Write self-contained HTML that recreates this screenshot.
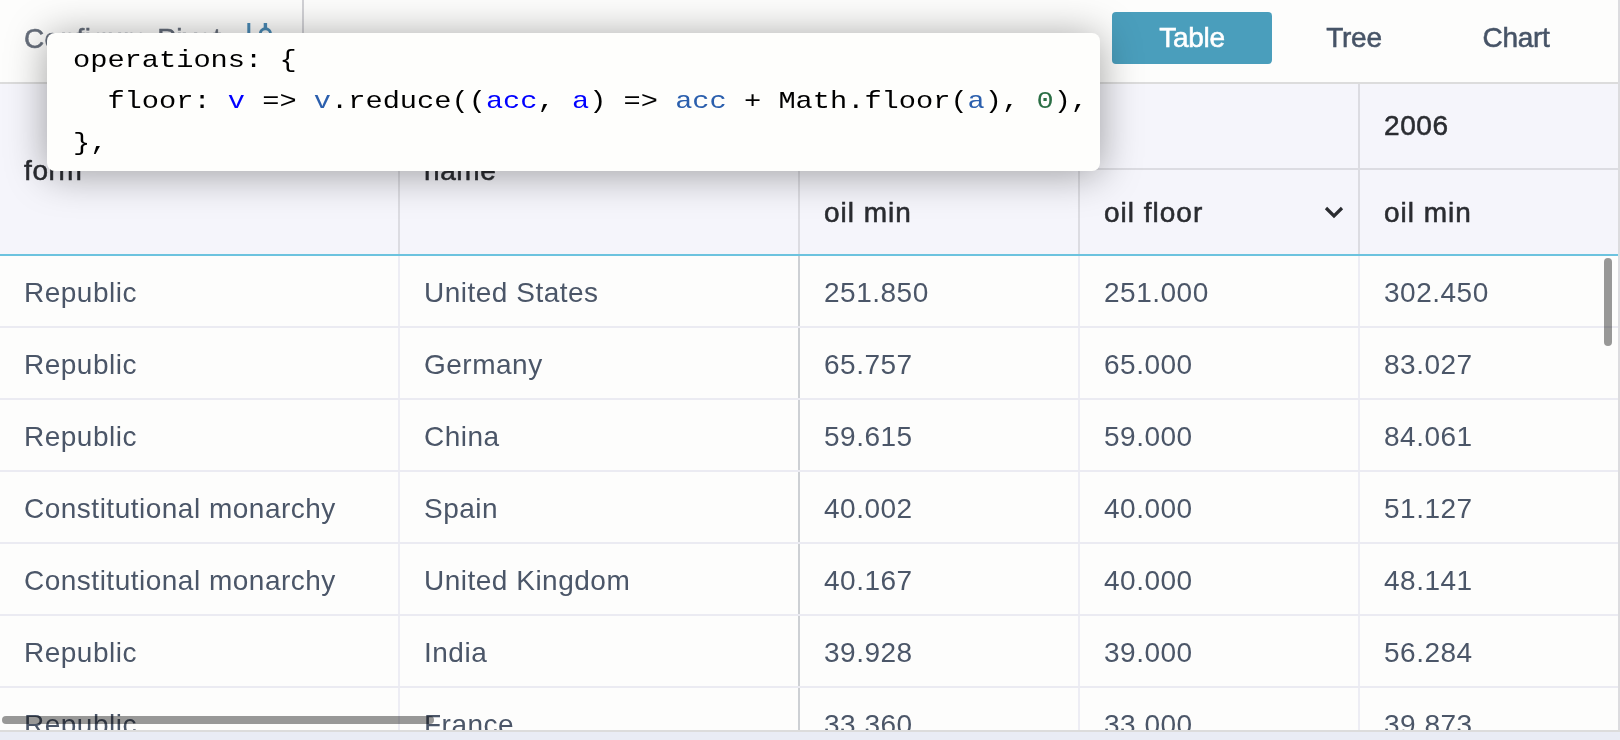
<!DOCTYPE html>
<html><head><meta charset="utf-8">
<style>
html,body{margin:0;padding:0;width:1620px;height:740px;overflow:hidden;background:#e9ecf5;}
body{position:relative;font-family:"Liberation Sans",sans-serif;}
.abs{position:absolute;}
.t{position:absolute;white-space:pre;font-size:28px;line-height:32px;height:32px;}
#app{will-change:transform;position:absolute;left:0;top:0;width:1618px;height:730px;background:#fdfdfc;overflow:hidden;}
.bord-r{position:absolute;left:1618px;top:0;width:2px;height:732px;background:#dcdcdf;}
.bord-b{position:absolute;left:0;top:730px;width:1620px;height:2px;background:#dcdcdc;}
.topbar{position:absolute;left:0;top:0;width:1618px;height:82px;background:#fdfdfc;}
.topline{position:absolute;left:0;top:82px;width:1618px;height:2px;background:#dcdcdc;}
.btn{position:absolute;top:12px;height:52px;width:160px;border-radius:4px;}
.btn.on{box-shadow:0 0 0 1px #fdfdfc;}
.btn .t{left:0;width:160px;text-align:center;top:10.2px;}
.hdr{position:absolute;left:0;top:84px;width:1618px;height:170px;background:#f5f5fb;}
.teal{position:absolute;left:0;top:254px;width:1618px;height:2px;background:#6cc3df;}
.vl{position:absolute;width:2px;}
.hl{position:absolute;height:2px;left:0;width:1618px;background:#ebebf2;}
.cell{color:#4b5668;letter-spacing:0.5px;}
.hd{color:#2a2c31;-webkit-text-stroke:0.55px #2a2c31;letter-spacing:1px;}
.tip{position:absolute;left:47px;top:33px;width:1053px;height:138px;background:#fefefc;border-radius:8px;box-shadow:0 3px 40px rgba(0,0,0,0.37);}
.code{position:absolute;left:0;white-space:pre;font-family:"Liberation Mono",monospace;font-size:24px;line-height:42px;height:42px;color:#000;transform:scaleX(1.19444);transform-origin:0 0;}
.p{color:#0000ff}.s{color:#2b5fad}.n{color:#2a6e44}
.sb{position:absolute;background:rgba(0,0,0,0.4);border-radius:4px;}
</style></head><body>
<div id="app">
  <div class="topbar"></div>
  <div class="t" style="left:24px;top:23px;color:#666e7b;-webkit-text-stroke:0.5px #666e7b;letter-spacing:0.4px">Configure Pivot</div>
  <svg class="abs" style="left:240px;top:18px" width="40" height="40" viewBox="0 0 40 40">
    <rect x="7.3" y="5" width="3" height="30" fill="#4a8ab5"/>
    <rect x="23.7" y="5" width="3.4" height="5" fill="#4a8ab5"/>
    <circle cx="25.4" cy="16" r="5.2" fill="none" stroke="#4a8ab5" stroke-width="3"/>
  </svg>
  <div class="vl" style="left:302px;top:0;height:82px;background:#d2d2d6"></div>
  <div class="btn on" style="left:1112px;background:#4a9ebc"><div class="t" style="color:#fff;-webkit-text-stroke:0.55px #fff;letter-spacing:-0.3px">Table</div></div>
  <div class="btn" style="left:1274px"><div class="t" style="color:#475467;-webkit-text-stroke:0.55px #475467;letter-spacing:-0.3px">Tree</div></div>
  <div class="btn" style="left:1436px"><div class="t" style="color:#475467;-webkit-text-stroke:0.55px #475467;letter-spacing:-0.3px">Chart</div></div>
  <div class="topline"></div>

  <div class="hdr"></div>
  <div class="vl" style="left:398px;top:84px;height:170px;background:#dcdce2"></div>
  <div class="vl" style="left:798px;top:84px;height:170px;background:#dcdce2"></div>
  <div class="vl" style="left:1078px;top:84px;height:170px;background:#dcdce2"></div>
  <div class="vl" style="left:1358px;top:84px;height:170px;background:#dcdce2"></div>
  <div class="abs" style="left:800px;top:168px;width:818px;height:2px;background:#dcdce2"></div>
  <div class="t hd" style="left:24px;top:155px;letter-spacing:0.6px">form</div>
  <div class="t hd" style="left:424px;top:155px;letter-spacing:0.6px">name</div>
  <div class="t hd" style="left:1384px;top:110px;letter-spacing:0.6px">2006</div>
  <div class="t hd" style="left:824px;top:197px">oil min</div>
  <div class="t hd" style="left:1104px;top:197px">oil floor</div>
  <div class="t hd" style="left:1384px;top:197px">oil min</div>
  <svg class="abs" style="left:1318px;top:198px" width="32" height="28" viewBox="0 0 32 28">
    <polyline points="8,10 16,18 24,10" fill="none" stroke="#2a2c30" stroke-width="3.2"/>
  </svg>
  <div class="teal"></div>

  <!-- body -->
  <div class="vl" style="left:398px;top:256px;height:474px;background:#ededf4"></div>
  <div class="vl" style="left:798px;top:256px;height:474px;background:#cdd0d4"></div>
  <div class="vl" style="left:1078px;top:256px;height:474px;background:#ededf4"></div>
  <div class="vl" style="left:1358px;top:256px;height:474px;background:#ededf4"></div>
  <div class="hl" style="top:326px"></div>
  <div class="hl" style="top:398px"></div>
  <div class="hl" style="top:470px"></div>
  <div class="hl" style="top:542px"></div>
  <div class="hl" style="top:614px"></div>
  <div class="hl" style="top:686px"></div>

    <div class="t cell" style="left:24px;top:277.3px">Republic</div>
  <div class="t cell" style="left:424px;top:277.3px">United States</div>
  <div class="t cell" style="left:824px;top:277.3px">251.850</div>
  <div class="t cell" style="left:1104px;top:277.3px">251.000</div>
  <div class="t cell" style="left:1384px;top:277.3px">302.450</div>
  <div class="t cell" style="left:24px;top:349.3px">Republic</div>
  <div class="t cell" style="left:424px;top:349.3px">Germany</div>
  <div class="t cell" style="left:824px;top:349.3px">65.757</div>
  <div class="t cell" style="left:1104px;top:349.3px">65.000</div>
  <div class="t cell" style="left:1384px;top:349.3px">83.027</div>
  <div class="t cell" style="left:24px;top:421.3px">Republic</div>
  <div class="t cell" style="left:424px;top:421.3px">China</div>
  <div class="t cell" style="left:824px;top:421.3px">59.615</div>
  <div class="t cell" style="left:1104px;top:421.3px">59.000</div>
  <div class="t cell" style="left:1384px;top:421.3px">84.061</div>
  <div class="t cell" style="left:24px;top:493.3px">Constitutional monarchy</div>
  <div class="t cell" style="left:424px;top:493.3px">Spain</div>
  <div class="t cell" style="left:824px;top:493.3px">40.002</div>
  <div class="t cell" style="left:1104px;top:493.3px">40.000</div>
  <div class="t cell" style="left:1384px;top:493.3px">51.127</div>
  <div class="t cell" style="left:24px;top:565.3px">Constitutional monarchy</div>
  <div class="t cell" style="left:424px;top:565.3px">United Kingdom</div>
  <div class="t cell" style="left:824px;top:565.3px">40.167</div>
  <div class="t cell" style="left:1104px;top:565.3px">40.000</div>
  <div class="t cell" style="left:1384px;top:565.3px">48.141</div>
  <div class="t cell" style="left:24px;top:637.3px">Republic</div>
  <div class="t cell" style="left:424px;top:637.3px">India</div>
  <div class="t cell" style="left:824px;top:637.3px">39.928</div>
  <div class="t cell" style="left:1104px;top:637.3px">39.000</div>
  <div class="t cell" style="left:1384px;top:637.3px">56.284</div>
  <div class="t cell" style="left:24px;top:709.3px">Republic</div>
  <div class="t cell" style="left:424px;top:709.3px">France</div>
  <div class="t cell" style="left:824px;top:709.3px">33.360</div>
  <div class="t cell" style="left:1104px;top:709.3px">33.000</div>
  <div class="t cell" style="left:1384px;top:709.3px">39.873</div>

  <div class="sb" style="left:1604px;top:258px;width:8px;height:88px"></div>
  <div class="sb" style="left:2px;top:716px;width:432px;height:8px"></div>

  <div class="tip">
    <div class="code" style="left:26px;top:6.6px">operations: {</div>
    <div class="code" style="left:26px;top:48.3px">  floor: <span class="p">v</span> =&gt; <span class="s">v</span>.reduce((<span class="p">acc</span>, <span class="p">a</span>) =&gt; <span class="s">acc</span> + Math.floor(<span class="s">a</span>), <span class="n">0</span>),</div>
    <div class="code" style="left:26px;top:89.6px">},</div>
  </div>
</div>
<div class="bord-r"></div>
<div class="bord-b"></div>
</body></html>
